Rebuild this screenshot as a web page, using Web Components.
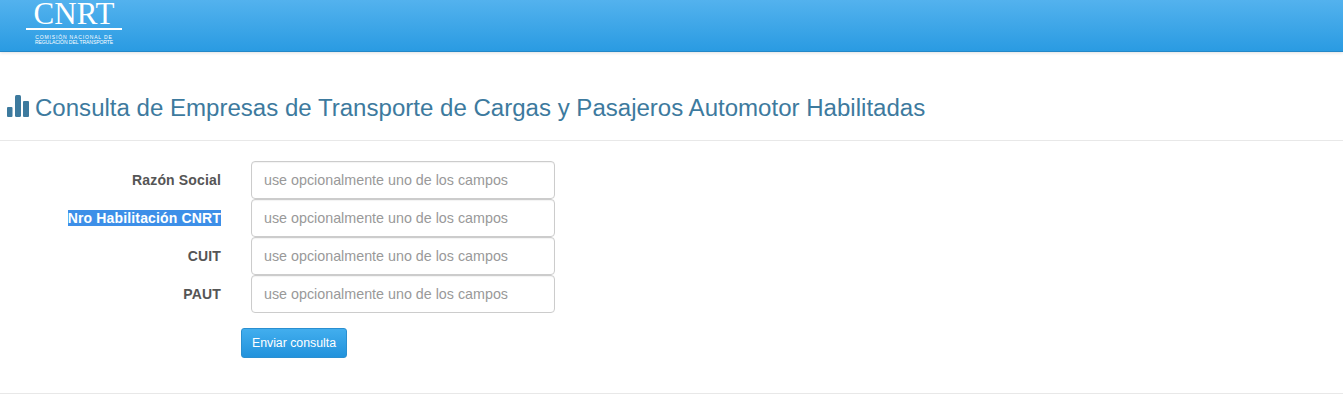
<!DOCTYPE html>
<html lang="es">
<head>
<meta charset="utf-8">
<title>CNRT</title>
<style>
html,body{margin:0;padding:0;background:#fff;overflow:hidden;}
body{font-family:"Liberation Sans",Arial,sans-serif;}
</style>
</head>
<body>
<top-bar></top-bar>
<page-title>Consulta de Empresas de Transporte de Cargas y Pasajeros Automotor Habilitadas</page-title>
<consulta-form>
  <form-row label="Razón Social"></form-row>
  <form-row label="Nro Habilitación CNRT" selected></form-row>
  <form-row label="CUIT"></form-row>
  <form-row label="PAUT"></form-row>
</consulta-form>
<script>
class TopBar extends HTMLElement{
  constructor(){
    super();
    this.attachShadow({mode:'open'}).innerHTML=`
    <style>
    :host{display:block;height:52px;box-sizing:border-box;background:linear-gradient(#53b2ee,#2a9be2);border-bottom:1px solid #2488c8;box-shadow:0 1px 3px rgba(0,0,0,.12);overflow:hidden;}
    .logo{width:96px;margin-left:26px;padding-top:2px;color:#fff;display:flex;flex-direction:column;align-items:center;}
    .name{font:31px/24px "Liberation Serif",serif;height:26px;white-space:nowrap;}
    .line{height:2px;width:100%;background:#fff;flex:none;}
    .sub{font:5px/5px "Liberation Sans",sans-serif;text-align:center;margin-top:5px;white-space:nowrap;}
    .a{letter-spacing:.85px;display:block;}
    .b{letter-spacing:-.05px;display:block;}
    </style>
    <div class="logo">
      <div class="name">CNRT</div>
      <div class="line"></div>
      <div class="sub"><span class="a">COMISIÓN NACIONAL DE</span><span class="b">REGULACIÓN DEL TRANSPORTE</span></div>
    </div>`;
  }
}
class PageTitle extends HTMLElement{
  constructor(){
    super();
    this.attachShadow({mode:'open'}).innerHTML=`
    <style>
    :host{display:flex;align-items:center;gap:6px;height:89px;box-sizing:border-box;padding:23px 0 0 7px;border-bottom:1px solid #e8e8e8;color:#3d7a9e;font-size:24.05px;white-space:nowrap;}
    svg{flex:none;display:block;margin-top:-4px;}
    </style>
    <svg width="22" height="22" viewBox="0 0 22 22" fill="#3d7a9e">
      <rect x="0" y="12" width="5.5" height="10" rx="1"/>
      <rect x="8" y="0" width="6" height="22" rx="1.5"/>
      <rect x="16" y="6" width="6" height="16" rx="1"/>
    </svg>
    <slot></slot>`;
  }
}
class ConsultaForm extends HTMLElement{
  constructor(){
    super();
    this.attachShadow({mode:'open'}).innerHTML=`
    <style>
    :host{display:block;height:253px;box-sizing:border-box;padding-top:20px;border-bottom:1px solid #e8e8e8;}
    .rows{display:flex;flex-direction:column;}
    button{display:block;margin:15px 0 0 241px;width:106px;height:30px;padding:0;box-sizing:border-box;border:1px solid #2a8fd0;border-radius:3px;background:linear-gradient(#42aeee,#2192dc);color:#fff;font:12.3px "Liberation Sans",sans-serif;}
    </style>
    <div class="rows"><slot></slot></div>
    <button type="button">Enviar consulta</button>`;
  }
}
class FormRow extends HTMLElement{
  constructor(){
    super();
    this.attachShadow({mode:'open'}).innerHTML=`
    <style>
    :host{display:flex;align-items:center;height:38px;}
    label{width:221px;text-align:right;font:bold 14px/15px "Liberation Sans",sans-serif;letter-spacing:.15px;color:#555;flex:none;}
    :host([selected]) span{background:#3d8fe8;color:#fff;}
    input{box-sizing:border-box;width:304px;height:38px;margin:0 0 0 30px;padding:0 12px;border:1px solid #ccc;border-radius:4px;font:14.3px "Liberation Sans",sans-serif;outline:none;box-shadow:inset 0 1px 1px rgba(0,0,0,.05);}
    input::placeholder{color:#999;opacity:1;}
    </style>
    <label><span></span></label>
    <input type="text" placeholder="use opcionalmente uno de los campos">`;
    this.shadowRoot.querySelector('span').textContent=this.getAttribute('label');
  }
}
customElements.define('top-bar',TopBar);
customElements.define('page-title',PageTitle);
customElements.define('consulta-form',ConsultaForm);
customElements.define('form-row',FormRow);
</script>
</body>
</html>
